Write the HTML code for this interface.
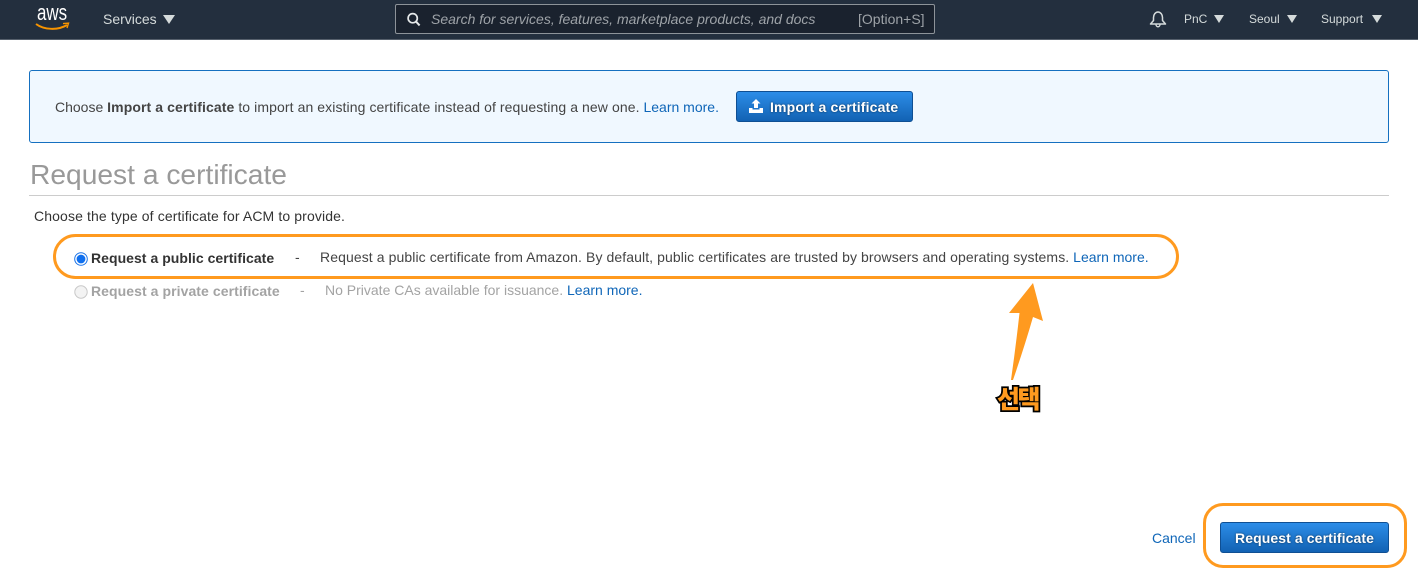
<!DOCTYPE html>
<html><head><meta charset="utf-8"><style>
html,body{margin:0;padding:0;width:1418px;height:569px;overflow:hidden;background:#fff}
body{position:relative;font-family:"Liberation Sans","Noto Sans CJK KR",sans-serif;font-size:14px;color:#444;-webkit-font-smoothing:antialiased}
.t{position:absolute;white-space:nowrap;line-height:18px}
a{color:#0f66b8;text-decoration:none;letter-spacing:0}
.nav{position:absolute;left:0;top:0;width:1418px;height:39px;background:#232f3e;border-bottom:1px solid #56606c}
.n{color:#d5dbdb;font-size:12px}
.tri{position:absolute;width:0;height:0;border-left:5.5px solid transparent;border-right:5.5px solid transparent;border-top:8px solid #d5dbdb}
.btn{position:absolute;box-sizing:border-box;background:linear-gradient(#2c8de8,#1262b3);border:1px solid #0f4f93;border-radius:3px;color:#fff;font-weight:bold}
.bt{color:#fff;font-weight:bold;text-shadow:0 0 2px rgba(0,0,0,.6)}
.oval{position:absolute;box-sizing:border-box;border:3px solid #ff9a1f}
svg{position:absolute;overflow:visible}
</style></head><body>
<div class="nav"></div>
<div class="t" style="left:37px;top:2px;font-size:22px;line-height:22px;color:#fff;transform:scaleX(.77);transform-origin:0 0">aws</div>
<svg style="left:0;top:0" width="100" height="39"><path d="M36 24C44 30 58 30.5 67 25" fill="none" stroke="#f79400" stroke-width="2"/><path d="M63 23.6L68.5 23.2L67 28" fill="none" stroke="#f79400" stroke-width="1.4"/></svg>
<div class="t" style="left:103px;top:10px;color:#d5dbdb;font-size:14px">Services</div>
<div class="tri" style="left:163px;top:15px;border-left-width:6px;border-right-width:6px;border-top-width:9px"></div>
<div style="position:absolute;left:395px;top:4px;width:540px;height:30px;box-sizing:border-box;background:#1a222e;border:1px solid #8d9399;border-radius:2px"></div>
<svg style="left:406px;top:12px" width="16" height="16"><circle cx="6.7" cy="6.2" r="4.6" fill="none" stroke="#e6e9ea" stroke-width="1.7"/><path d="M10 9.6L13.6 13.4" stroke="#e6e9ea" stroke-width="2"/></svg>
<div class="t" style="left:431px;top:10px;font-style:italic;color:#9ea3a8;font-size:14px">Search for services, features, marketplace products, and docs</div>
<div class="t" style="left:858px;top:10px;color:#9ea3a8;font-size:14px">[Option+S]</div>
<svg style="left:1149px;top:10px" width="18" height="18"><path d="M1.5 14L4.5 10.5V7.5C4.5 4.5 6.5 2 9 2C11.5 2 13.5 4.5 13.5 7.5V10.5L16.500 14Z" fill="none" stroke="#d5dbdb" stroke-width="1.5" stroke-linejoin="round"/><path d="M7 14.5C7 17.500 11 17.500 11 14.5" fill="none" stroke="#d5dbdb" stroke-width="1.4"/></svg>
<div class="t n" style="left:1184px;top:10px">PnC</div><div class="tri" style="left:1214px;top:15px"></div>
<div class="t n" style="left:1249px;top:10px">Seoul</div><div class="tri" style="left:1287px;top:15px"></div>
<div class="t n" style="left:1321px;top:10px">Support</div><div class="tri" style="left:1372px;top:15px"></div>

<div style="position:absolute;left:29px;top:70px;width:1360px;height:73px;box-sizing:border-box;background:#f0f8ff;border:1px solid #1570c0;border-radius:3px"></div>
<div class="t" style="left:55px;top:98px">Choose <b style="letter-spacing:.1px">Import a certificate</b> <span style="letter-spacing:.09px">to import an existing certificate instead of requesting a new one.</span> <a>Learn more.</a></div>
<div class="btn" style="left:736px;top:91px;width:177px;height:31px"></div>
<svg style="left:748px;top:98px" width="16" height="16"><path d="M8 1L12.5 5.5H10V10H6V5.5H3.5Z" fill="#fff"/><path d="M1 10H4.5V11.5H11.5V10H15V15H1Z" fill="#fff"/></svg>
<div class="t bt" style="left:770px;top:98px;letter-spacing:.15px">Import a certificate</div>

<div class="t" style="left:30px;top:158px;font-size:28.2px;line-height:32px;color:#999">Request a certificate</div>
<div style="position:absolute;left:29px;top:195px;width:1360px;height:1px;background:#ccc"></div>
<div class="t" style="left:34px;top:207px;color:#333;letter-spacing:.12px">Choose the type of certificate for ACM to provide.</div>

<div class="oval" style="left:53px;top:234px;width:1126px;height:45px;border-radius:23px"></div>
<svg style="left:74px;top:252px" width="14" height="14"><circle cx="7" cy="7" r="6.3" fill="#fff" stroke="#1a73e8" stroke-width="1"/><circle cx="7" cy="7" r="4.4" fill="#0f6fee"/></svg>
<div class="t" style="left:91px;top:249px;font-weight:bold;color:#333;letter-spacing:.04px">Request a public certificate</div>
<div class="t" style="left:295px;top:248px">-</div>
<div class="t" style="left:320px;top:248px"><span style="letter-spacing:.09px">Request a public certificate from Amazon. By default, public certificates are trusted by browsers and operating systems.</span> <a>Learn more.</a></div>

<svg style="left:74px;top:285px" width="14" height="14"><circle cx="7" cy="7" r="6.2" fill="#f3f3f3" stroke="#c8c8c8" stroke-width="1"/></svg>
<div class="t" style="left:91px;top:282px;font-weight:bold;color:#a3a3a3;letter-spacing:.07px">Request a private certificate</div>
<div class="t" style="left:300px;top:281px;color:#a3a3a3">-</div>
<div class="t" style="left:325px;top:281px;color:#a3a3a3">No Private CAs available for issuance. <a>Learn more.</a></div>

<svg style="left:0;top:0" width="1418" height="569"><path d="M1033 283L1009 313L1019.500 313Q1016 345 1011 380L1013 380Q1025 345 1033 317L1043 321Z" fill="#ff9a1f"/></svg>
<div class="t" style="left:997px;top:386px;font-size:25px;line-height:28px;font-weight:900;color:#ff9a1f;-webkit-text-stroke:3.5px #000;paint-order:stroke fill;letter-spacing:-2.500px;text-shadow:1px 1px 1px rgba(0,0,0,.5)">선택</div>

<div class="t" style="left:1152px;top:529px"><a>Cancel</a></div>
<div class="oval" style="left:1203px;top:503px;width:204px;height:65px;border-radius:20px"></div>
<div class="btn" style="left:1220px;top:522px;width:169px;height:31px"></div>
<div class="t bt" style="left:1235px;top:529px;letter-spacing:.1px">Request a certificate</div>
</body></html>
